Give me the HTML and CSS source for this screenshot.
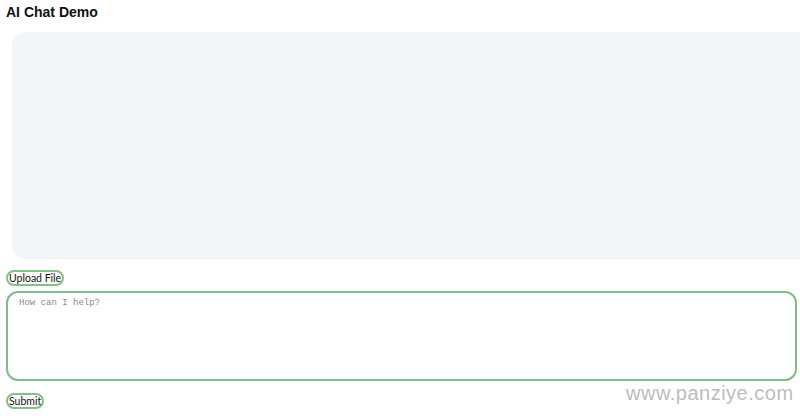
FILE: index.html
```html
<!DOCTYPE html>
<html lang="en">
<head>
    <meta charset="UTF-8">
    <meta name="viewport" content="width=device-width, initial-scale=1.0">
    <title>AI Chat Demo</title>
    <link rel="stylesheet" href="styles.css">
</head>
<body>
    <!-- Заголовок -->
    <h1 class="title">AI Chat Demo</h1>

    <!-- Окно сообщений -->
    <div class="chat-box" id="chat-box"></div>

    <!-- Форма ввода -->
    <div class="chat-form">
        <button class="pill-btn" type="button">Upload File</button>
        <textarea class="prompt" placeholder="How can I help?"></textarea>
        <button class="pill-btn" type="submit">Submit</button>
    </div>

    <div class="watermark">www.panziye.com</div>
</body>
</html>
```

FILE: styles.css
```css
/* Общие стили */
body {
    font-family: "Liberation Sans", Arial, sans-serif;
    margin: 0;
    padding: 3px 0 0 6px;
    background-color: #ffffff;
    overflow: hidden;
}
.title {
    font-size: 14px;
    font-weight: bold;
    color: #111;
    margin: 0 0 11px 0;
    line-height: 18px;
}
.chat-box {
    margin-left: 6px;
    margin-right: -6px;
    height: 227px;
    background: #f3f5f9;
    border-radius: 14px 0 0 14px;
    border-right: 6px solid #eaecef;
}
.chat-form {
    display: flex;
    flex-direction: column;
    align-items: flex-start;
    margin-top: 11px;
}
.pill-btn {
    font-family: Lato, "Open Sans", sans-serif;
    font-size: 10.5px;
    color: #111;
    background: #fff;
    border: 2px solid #84bf86;
    border-radius: 10px;
    padding: 0 1px;
    height: 16px;
    line-height: 12px;
}
.prompt {
    box-sizing: border-box;
    width: 791px;
    height: 90px;
    margin: 5px 0 12px 0;
    padding: 5px 11px;
    border: 2px solid #80bd82;
    border-radius: 12px;
    font-family: "Liberation Mono", monospace;
    font-size: 9px;
    resize: none;
    outline: none;
}
.prompt::placeholder {
    color: #8a8a8a;
}
.watermark {
    position: absolute;
    left: 626px;
    top: 382px;
    font-size: 20px;
    letter-spacing: 0.5px;
    color: #bdbdbd;
}
```
